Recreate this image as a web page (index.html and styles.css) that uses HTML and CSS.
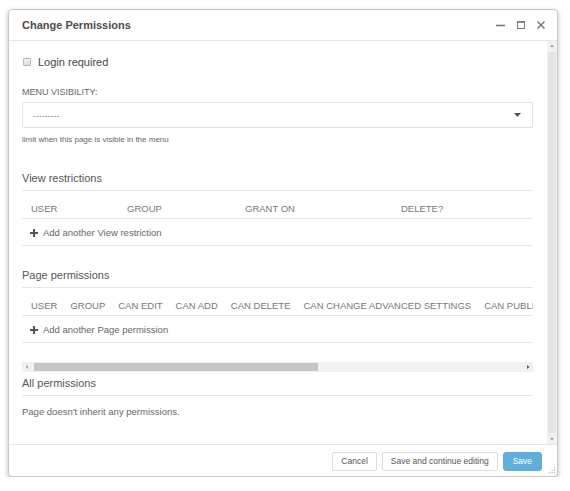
FILE: index.html
```html
<!DOCTYPE html>
<html>
<head>
<meta charset="utf-8">
<title>Change Permissions</title>
<link rel="stylesheet" href="styles.css">
</head>
<body>
<div class="modal">
  <div class="modal-header">
    <span class="title">Change Permissions</span>
    <div class="controls">
      <svg class="ctl" width="9" height="9" viewBox="0 0 9 9"><rect x="0" y="3.7" width="9" height="1.6" fill="#7a7a7a"/></svg>
      <svg class="ctl" width="8" height="8" viewBox="0 0 8 8"><rect x="0.5" y="0.5" width="7" height="7" fill="none" stroke="#7a7a7a" stroke-width="1"/><rect x="0" y="0" width="8" height="1.8" fill="#7a7a7a"/></svg>
      <svg class="ctl" width="8" height="8" viewBox="0 0 8 8"><path d="M1 1 L7 7 M7 1 L1 7" stroke="#7a7a7a" stroke-width="1.5" stroke-linecap="square"/></svg>
    </div>
  </div>
  <div class="modal-main">
    <div class="modal-body">
      <div class="check-row"><span class="checkbox"></span><span class="check-label">Login required</span></div>
      <div class="field-label">MENU VISIBILITY:</div>
      <div class="select"><span class="select-value">---------</span><svg width="7" height="4" viewBox="0 0 7 4"><path d="M0 0 H7 L3.5 4 Z" fill="#555"/></svg></div>
      <div class="help">limit when this page is visible in the menu</div>

      <div class="section-title first">View restrictions</div>
      <table class="perm-table view">
        <colgroup><col class="c1"><col class="c2"><col class="c3"><col></colgroup>
        <thead><tr><th>USER</th><th>GROUP</th><th>GRANT ON</th><th>DELETE?</th></tr></thead>
        <tbody><tr><td colspan="4" class="add"><svg width="8" height="8" viewBox="0 0 8 8"><path d="M0 3 H8 V5 H0 Z M3 0 H5 V8 H3 Z" fill="#555"/></svg><span>Add another View restriction</span></td></tr></tbody>
      </table>

      <div class="section-title">Page permissions</div>
      <div class="table-clip">
        <table class="perm-table page">
          <thead><tr><th>USER</th><th>GROUP</th><th>CAN EDIT</th><th>CAN ADD</th><th>CAN DELETE</th><th>CAN CHANGE ADVANCED SETTINGS</th><th>CAN PUBLISH</th></tr></thead>
          <tbody><tr><td colspan="7" class="add"><svg width="8" height="8" viewBox="0 0 8 8"><path d="M0 3 H8 V5 H0 Z M3 0 H5 V8 H3 Z" fill="#555"/></svg><span>Add another Page permission</span></td></tr></tbody>
        </table>
      </div>
      <div class="hscroll">
        <svg class="arrow" width="6" height="10" viewBox="0 0 6 10"><path d="M4 3 L1.5 5 L4 7 Z" fill="#aaa"/></svg>
        <div class="hthumb"></div>
        <div class="hspace"></div>
        <svg class="arrow" width="6" height="10" viewBox="0 0 6 10"><path d="M2 3 L4.5 5 L2 7 Z" fill="#555"/></svg>
      </div>

      <div class="section-title last">All permissions</div>
      <p class="note">Page doesn't inherit any permissions.</p>
    </div>
    <div class="vscroll">
      <svg width="10" height="10" viewBox="0 0 10 10"><path d="M3 6 L5 3.5 L7 6 Z" fill="#999"/></svg>
      <div class="vthumb"></div>
      <svg width="10" height="10" viewBox="0 0 10 10"><path d="M3 4 L5 6.5 L7 4 Z" fill="#999"/></svg>
    </div>
  </div>
  <div class="modal-footer">
    <button class="btn">Cancel</button>
    <button class="btn">Save and continue editing</button>
    <button class="btn primary">Save</button>
  </div>
  <svg class="grip" width="9" height="9" viewBox="0 0 9 9">
    <rect x="7" y="1" width="1.2" height="1.2" fill="#bbb"/>
    <rect x="4.5" y="3.5" width="1.2" height="1.2" fill="#bbb"/>
    <rect x="7" y="3.5" width="1.2" height="1.2" fill="#bbb"/>
    <rect x="2" y="6" width="1.2" height="1.2" fill="#bbb"/>
    <rect x="4.5" y="6" width="1.2" height="1.2" fill="#bbb"/>
    <rect x="7" y="6" width="1.2" height="1.2" fill="#bbb"/>
  </svg>
</div>
</body>
</html>
```

FILE: styles.css
```css
* { box-sizing: border-box; }

html, body {
  margin: 0;
  padding: 0;
  background: #ffffff;
  font-family: "Liberation Sans", Arial, sans-serif;
  color: #555;
}

.modal {
  position: relative;
  width: 550px;
  height: 468px;
  margin: 9px 0 0 8px;
  border: 1px solid #c9c9c9;
  border-radius: 4px;
  background: #fff;
  box-shadow: 0 2px 5px rgba(0, 0, 0, 0.28);
  display: flex;
  flex-direction: column;
  overflow: hidden;
}

.modal-header {
  height: 31px;
  flex: none;
  display: flex;
  align-items: center;
  justify-content: space-between;
  padding: 0 12px 0 13px;
  border-bottom: 1px solid #e6e6e6;
}

.title {
  font-size: 11px;
  font-weight: bold;
  color: #4d4d4d;
  line-height: 14px;
  margin-top: -1px;
}

.controls {
  display: flex;
  align-items: center;
  gap: 12px;
}

.ctl { display: block; }

.modal-main {
  height: 403px;
  flex: none;
  display: flex;
}

.modal-body {
  flex: 1;
  min-width: 0;
  padding: 0 14px 0 13px;
  overflow: hidden;
}

.check-row {
  margin-top: 14px;
  height: 14px;
  display: flex;
  align-items: center;
}

.checkbox {
  width: 8px;
  height: 8px;
  margin-left: 1px;
  margin-right: 7px;
  border: 1px solid #b5b5b5;
  border-radius: 1px;
  background: linear-gradient(#f4f4f4, #dcdcdc);
}

.check-label {
  font-size: 11px;
  line-height: 14px;
  color: #444;
}

.field-label {
  margin-top: 17px;
  font-size: 9px;
  line-height: 12px;
  color: #666;
}

.select {
  margin-top: 4px;
  height: 26px;
  border: 1px solid #e2e2e2;
  border-radius: 2px;
  display: flex;
  align-items: center;
  justify-content: space-between;
  padding: 0 11px 0 10px;
}

.select-value {
  font-size: 8px;
  color: #666;
  letter-spacing: 0.3px;
}

.select svg { display: block; }

.help {
  margin-top: 6px;
  font-size: 8px;
  line-height: 11px;
  color: #666;
}

.section-title {
  margin-top: 22px;
  font-size: 11px;
  line-height: 14px;
  padding-bottom: 5px;
  color: #555;
  border-bottom: 1px solid #e6e6e6;
}

.section-title.first { margin-top: 26px; }
.section-title.last { margin-top: 4px; }

.perm-table {
  border-collapse: collapse;
  font-size: 9.5px;
  color: #777;
}

.perm-table.view {
  width: 100%;
  table-layout: fixed;
}

.perm-table .c1 { width: 96px; }
.perm-table .c2 { width: 118px; }
.perm-table .c3 { width: 156px; }

.perm-table th {
  text-align: left;
  font-weight: normal;
  white-space: nowrap;
  line-height: 11px;
  padding: 12px 4px 4px 9px;
  border-bottom: 1px solid #e6e6e6;
}

.perm-table td {
  line-height: 11px;
  padding: 8px 0 7px 8px;
  border-bottom: 1px solid #e6e6e6;
  color: #666;
}

.add {
  white-space: nowrap;
}

.add svg {
  display: inline-block;
  vertical-align: -0.5px;
  margin-right: 5px;
}

.table-clip {
  width: 100%;
  overflow: hidden;
}

.perm-table.page {
  min-width: 100%;
}

.hscroll {
  margin-top: 19px;
  height: 10px;
  display: flex;
  align-items: stretch;
  background: #f1f1f1;
}

.hscroll .arrow {
  flex: none;
  display: block;
  width: 10px;
}

.hthumb {
  margin-left: 2px;
  width: 284px;
  margin-top: 1px;
  margin-bottom: 1px;
  background: #c6c6c6;
}

.hspace { flex: 1; }

.note {
  margin: 10px 0 0 0;
  font-size: 9.5px;
  line-height: 11px;
  color: #666;
}

.vscroll {
  flex: none;
  width: 10px;
  background: #f1f1f1;
  display: flex;
  flex-direction: column;
  align-items: stretch;
}

.vscroll svg { display: block; flex: none; }

.vthumb {
  flex: 1;
  margin: 1px 1px;
  background: #e4e4e4;
}

.modal-footer {
  flex: 1;
  border-top: 1px solid #e6e6e6;
  display: flex;
  justify-content: flex-end;
  align-items: flex-start;
  gap: 5px;
  padding: 7px 15px 0 0;
}

.btn {
  height: 19px;
  padding: 0 8px;
  font-family: "Liberation Sans", Arial, sans-serif;
  font-size: 8.5px;
  color: #555;
  background: #fff;
  border: 1px solid #dcdcdc;
  border-radius: 2px;
  line-height: 17px;
}

.btn.primary {
  padding: 0 9px;
  color: #fff;
  background: #62aedb;
  border-color: #62aedb;
  border-radius: 3px;
}

.grip {
  position: absolute;
  right: 1px;
  bottom: 1px;
}
```
